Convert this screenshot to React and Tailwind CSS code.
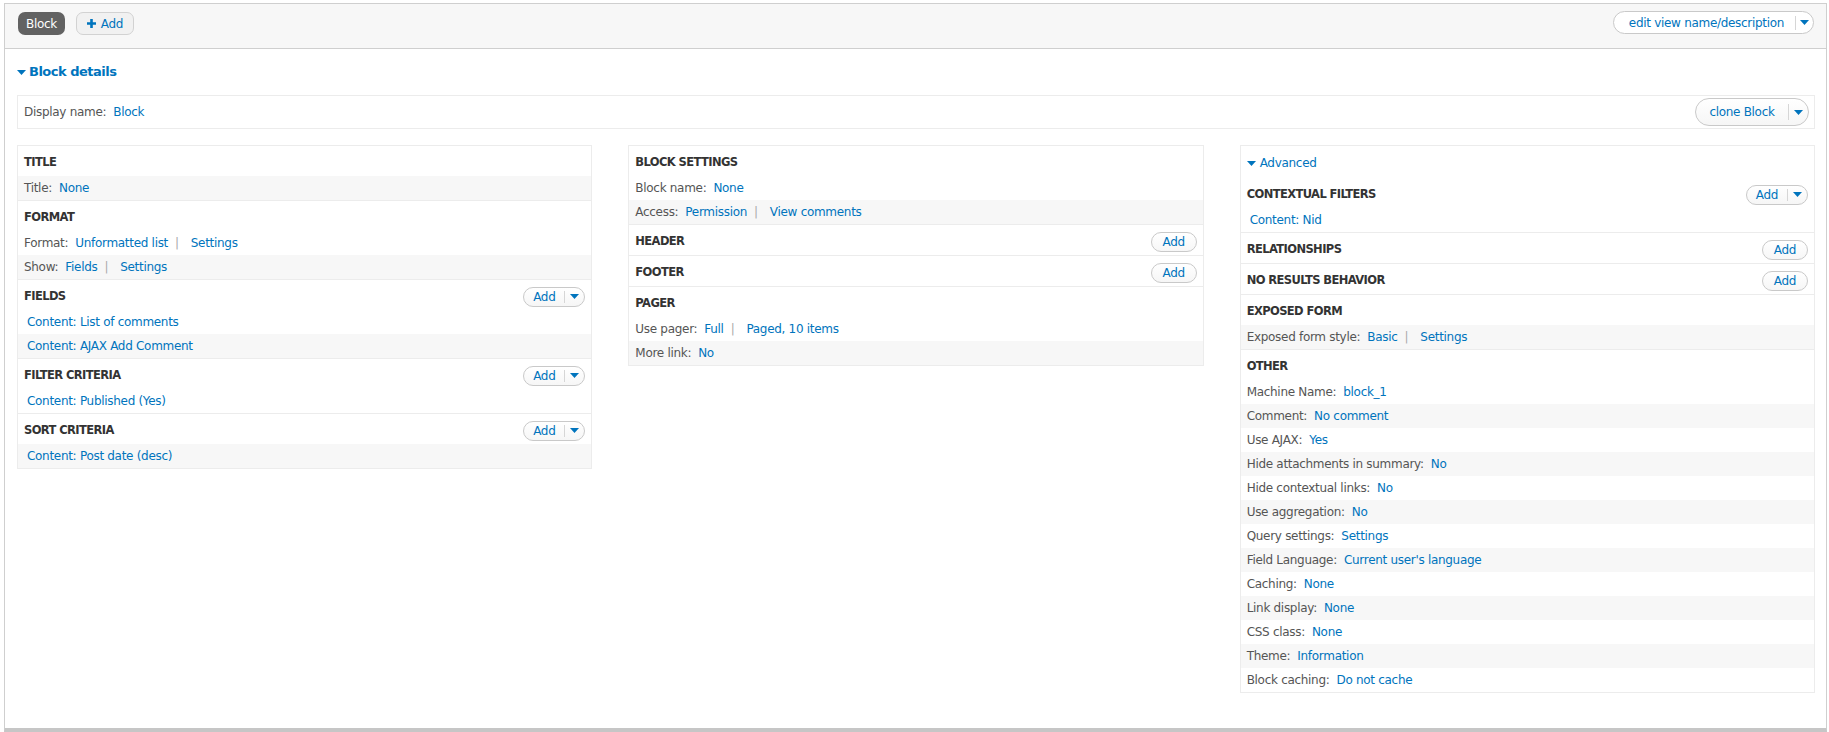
import React from 'react'

const font = "font-['DejaVu_Sans',sans-serif] tracking-[-0.3px]"

function Caret({ className = '' }) {
    return (
        <svg width="9" height="5" viewBox="0 0 9 5" className={className}>
            <path d="M0 0 H9 L4.5 5 Z" fill="#0074bd" />
        </svg>
    )
}

function AddButton({ split }) {
    if (!split) {
        return (
            <button className="h-[20px] w-[46px] rounded-full border border-[#c9c9c9] bg-gradient-to-b from-white to-[#f6f6f6] text-[12px] text-[#0074bd] flex items-center justify-center">
                Add
            </button>
        )
    }
    return (
        <div className="h-[20px] w-[62px] rounded-full border border-[#c9c9c9] bg-gradient-to-b from-white to-[#f6f6f6] flex items-center text-[12px] text-[#0074bd]">
            <span className="w-[40px] text-center">Add</span>
            <span className="h-[12px] border-l border-[#d6d6d6]" />
            <span className="flex-1 flex justify-center"><Caret /></span>
        </div>
    )
}

function Row({ label, links, gray, indent }) {
    return (
        <div className={`h-[24px] flex items-center ${indent ? 'pl-[9px]' : 'pl-[6px]'} pr-[6px] ${gray ? 'bg-[#f7f7f7]' : ''}`}>
            {label && <span className="text-[#555] mr-[7px]">{label}:</span>}
            {links.map((l, i) => (
                <React.Fragment key={i}>
                    {i > 0 && <span className="text-[#aaa] ml-[7px] mr-[12px]">|</span>}
                    <span className="text-[#0074bd]">{l}</span>
                </React.Fragment>
            ))}
        </div>
    )
}

function Bucket({ title, add, rows, first }) {
    return (
        <div className={first ? '' : 'border-t border-[#ececec]'}>
            <div className="h-[30px] flex items-center justify-between pl-[6px] pr-[6px] pt-[3px]">
                <h3 className="font-bold text-[11.5px] tracking-[-0.6px] text-[#333]">{title}</h3>
                {add && <AddButton split={add === 'split'} />}
            </div>
            {rows.map((r, i) => <Row key={i} {...r} />)}
        </div>
    )
}

const leftCol = [
    { title: 'TITLE', rows: [{ label: 'Title', links: ['None'], gray: true }] },
    { title: 'FORMAT', rows: [{ label: 'Format', links: ['Unformatted list', 'Settings'] }, { label: 'Show', links: ['Fields', 'Settings'], gray: true }] },
    { title: 'FIELDS', add: 'split', rows: [{ links: ['Content: List of comments'], indent: true }, { links: ['Content: AJAX Add Comment'], indent: true, gray: true }] },
    { title: 'FILTER CRITERIA', add: 'split', rows: [{ links: ['Content: Published (Yes)'], indent: true }] },
    { title: 'SORT CRITERIA', add: 'split', rows: [{ links: ['Content: Post date (desc)'], indent: true, gray: true }] },
]

const midCol = [
    { title: 'BLOCK SETTINGS', rows: [{ label: 'Block name', links: ['None'] }, { label: 'Access', links: ['Permission', 'View comments'], gray: true }] },
    { title: 'HEADER', add: 'plain', rows: [] },
    { title: 'FOOTER', add: 'plain', rows: [] },
    { title: 'PAGER', rows: [{ label: 'Use pager', links: ['Full', 'Paged, 10 items'] }, { label: 'More link', links: ['No'], gray: true }] },
]

const otherRows = [
    ['Machine Name', 'block_1'],
    ['Comment', 'No comment'],
    ['Use AJAX', 'Yes'],
    ['Hide attachments in summary', 'No'],
    ['Hide contextual links', 'No'],
    ['Use aggregation', 'No'],
    ['Query settings', 'Settings'],
    ['Field Language', "Current user's language"],
    ['Caching', 'None'],
    ['Link display', 'None'],
    ['CSS class', 'None'],
    ['Theme', 'Information'],
    ['Block caching', 'Do not cache'],
]

const rightCol = [
    { title: 'CONTEXTUAL FILTERS', add: 'split', rows: [{ links: ['Content: Nid'], indent: true }] },
    { title: 'RELATIONSHIPS', add: 'plain', rows: [] },
    { title: 'NO RESULTS BEHAVIOR', add: 'plain', rows: [] },
    { title: 'EXPOSED FORM', rows: [{ label: 'Exposed form style', links: ['Basic', 'Settings'], gray: true }] },
    { title: 'OTHER', rows: otherRows.map(([label, v], i) => ({ label, links: [v], gray: i % 2 === 1 })) },
]

function Column({ children }) {
    return <div className="border border-[#ececec] self-start">{children}</div>
}

export default function App() {
    return (
        <div className={`${font} text-[12px] bg-white h-[732px] pt-[3px] pl-[4px] pr-[2px] overflow-hidden`}>
            <div className="h-[729px] border border-[#cfcfcf] border-b-[4px] border-b-[#c6c6c6] flex flex-col">
                {/* top tabs bar */}
                <div className="h-[45px] bg-[#f7f7f7] border-b border-[#cfcfcf] flex items-start justify-between pl-[13px] pr-[12px] pt-[8px]">
                    <div className="flex gap-[11px]">
                        <span className="h-[23px] px-[8px] rounded-[7px] bg-[#626262] text-white flex items-center">Block</span>
                        <span className="h-[23px] w-[58px] rounded-[7px] border border-[#d2d2d2] bg-[#f1f1f1] text-[#0074bd] flex items-center justify-center gap-[5px]">
                            <svg width="9" height="9" viewBox="0 0 9 9"><path d="M3.2 0h2.6v3.2H9v2.6H5.8V9H3.2V5.8H0V3.2h3.2z" fill="#0074bd" /></svg>
                            Add
                        </span>
                    </div>
                    <div className="mt-[-1px] h-[23px] w-[201px] rounded-full border border-[#c9c9c9] bg-white flex items-center text-[#0074bd]">
                        <span className="flex-1 text-center pl-[4px]">edit view name/description</span>
                        <span className="h-[14px] border-l border-[#d6d6d6]" />
                        <span className="w-[17px] flex justify-center"><Caret /></span>
                    </div>
                </div>

                <div className="pl-[12px] pr-[11px]">
                    {/* Block details */}
                    <div className="h-[18px] mt-[14px] flex items-center gap-[3px] text-[#0074bd] font-bold text-[13px] tracking-[-0.5px]">
                        <Caret />
                        <span>Block details</span>
                    </div>

                    <div className="mt-[14px] h-[34px] border border-[#ececec] flex items-center justify-between pl-[6px] pr-[5px]">
                        <div>
                            <span className="text-[#555] mr-[7px]">Display name:</span>
                            <span className="text-[#0074bd]">Block</span>
                        </div>
                        <div className="h-[28px] w-[114px] rounded-full border border-[#c9c9c9] bg-gradient-to-b from-white to-[#f6f6f6] flex items-center text-[#0074bd]">
                            <span className="flex-1 text-center">clone Block</span>
                            <span className="h-[16px] border-l border-[#d6d6d6]" />
                            <span className="w-[19px] flex justify-center"><Caret /></span>
                        </div>
                    </div>

                    <div className="mt-[16px] grid grid-cols-3 gap-x-[36px] items-start">
                        <Column>
                            {leftCol.map((b, i) => <Bucket key={b.title} {...b} first={i === 0} />)}
                        </Column>
                        <Column>
                            {midCol.map((b, i) => <Bucket key={b.title} {...b} first={i === 0} />)}
                        </Column>
                        <Column>
                            <div className="h-[32px] flex items-center gap-[4px] pl-[6px] pt-[2px] text-[#0074bd]">
                                <Caret />
                                <span>Advanced</span>
                            </div>
                            {rightCol.map((b, i) => <Bucket key={b.title} {...b} first={i === 0} />)}
                        </Column>
                    </div>
                </div>
            </div>
        </div>
    )
}
